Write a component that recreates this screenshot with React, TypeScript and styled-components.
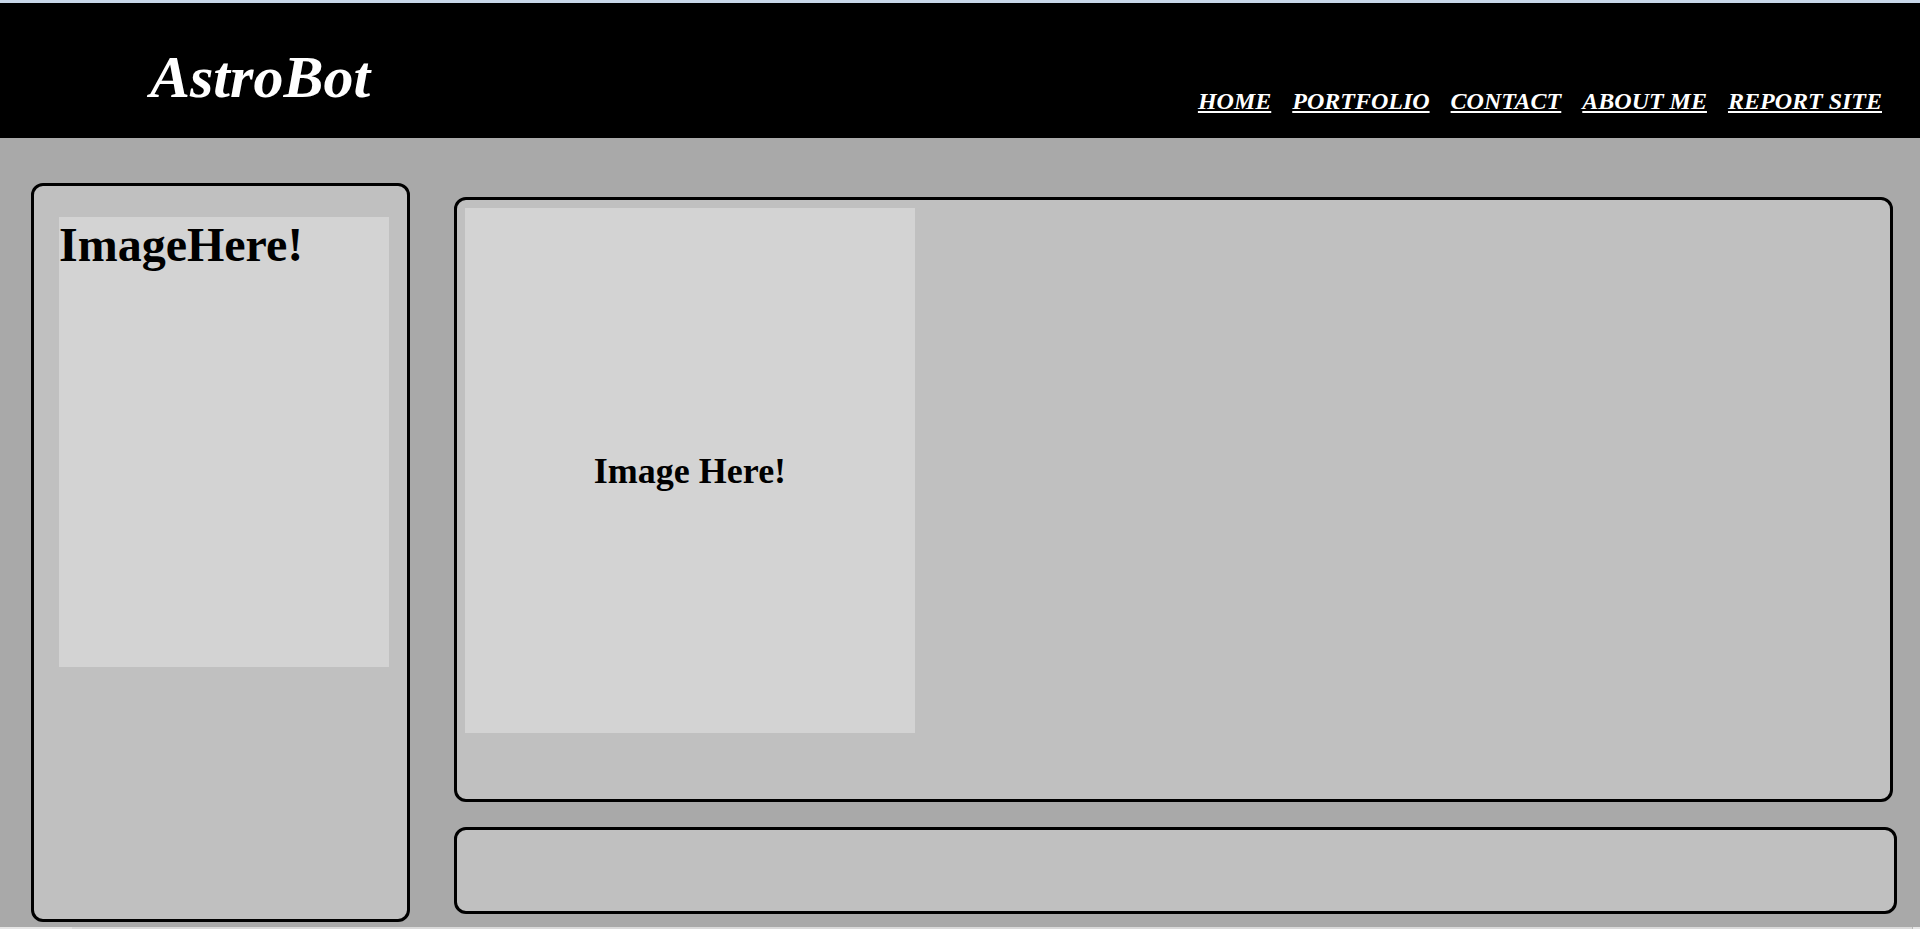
import React from "react";
import styled, { createGlobalStyle } from "styled-components";

const GlobalStyle = createGlobalStyle`
  html, body {
    margin: 0;
    padding: 0;
    background: #a9a9a9;
    font-family: "Liberation Serif", "Times New Roman", serif;
    overflow: hidden;
  }
  * { box-sizing: border-box; }
`;

const Page = styled.div`
  width: 1920px;
  height: 929px;
  display: flex;
  flex-direction: column;
`;

const TopLine = styled.div`
  height: 3px;
  background: #c9d7ea;
  flex: none;
`;

const Header = styled.header`
  height: 135px;
  background: #000;
  display: flex;
  justify-content: space-between;
  align-items: flex-start;
  flex: none;
`;

const Logo = styled.h1`
  margin: 40px 0 0 150px;
  font-size: 60px;
  font-weight: bold;
  font-style: italic;
  color: #fff;
  line-height: normal;
`;

const Nav = styled.nav`
  margin: 85px 38px 0 0;
  display: flex;
  gap: 21px;
`;

const NavLink = styled.a`
  font-size: 24px;
  font-weight: bold;
  font-style: italic;
  color: #fff;
  text-decoration: underline;
  line-height: normal;
  cursor: pointer;
`;

const Main = styled.main`
  flex: 1;
  display: flex;
  align-items: flex-start;
  gap: 44px;
  padding-left: 31px;
`;

const Panel = styled.section<{ $w: number; $h: number }>`
  width: ${(p) => p.$w}px;
  height: ${(p) => p.$h}px;
  background: #c0c0c0;
  border: 3px solid #000;
  border-radius: 12px;
  flex: none;
`;

const SidePanel = styled(Panel)`
  margin-top: 45px;
  padding: 31px 0 0 25px;
`;

const Column = styled.div`
  margin-top: 59px;
  display: flex;
  flex-direction: column;
  gap: 25px;
`;

const FeaturePanel = styled(Panel)`
  padding: 8px;
`;

const SideImage = styled.div`
  width: 330px;
  height: 450px;
  background: #d3d3d3;
`;

const SideTitle = styled.h2`
  margin: 0;
  font-size: 48px;
  font-weight: bold;
  color: #000;
  line-height: normal;
`;

const FeatureImage = styled.div`
  width: 450px;
  height: 525px;
  background: #d3d3d3;
  display: flex;
  align-items: center;
  justify-content: center;
`;

const FeatureTitle = styled.h2`
  margin: 0;
  font-size: 36px;
  font-weight: bold;
  color: #000;
`;

const ScrollBar = styled.div`
  height: 2px;
  flex: none;
  display: flex;
  background: #dadada;
`;

const ScrollPart = styled.div<{ $w: number; $c: string }>`
  width: ${(p) => p.$w}px;
  background: ${(p) => p.$c};
`;

const Spacer = styled.div`
  flex: 1;
`;

const links = ["HOME", "PORTFOLIO", "CONTACT", "ABOUT ME", "REPORT SITE"];

export default function App() {
  return (
    <>
      <GlobalStyle />
      <Page>
        <TopLine />
        <Header>
          <Logo>AstroBot</Logo>
          <Nav>
            {links.map((l) => (
              <NavLink key={l}>{l}</NavLink>
            ))}
          </Nav>
        </Header>
        <Main>
          <SidePanel $w={379} $h={739}>
            <SideImage>
              <SideTitle>ImageHere!</SideTitle>
            </SideImage>
          </SidePanel>
          <Column>
            <FeaturePanel $w={1439} $h={605}>
              <FeatureImage>
                <FeatureTitle>Image Here!</FeatureTitle>
              </FeatureImage>
            </FeaturePanel>
            <Panel $w={1443} $h={87} />
          </Column>
        </Main>
        <ScrollBar>
          <ScrollPart $w={72} $c="#e6e6e6" />
          <Spacer />
          <ScrollPart $w={1} $c="#b8b8b8" />
          <ScrollPart $w={7} $c="#e6e6e6" />
        </ScrollBar>
      </Page>
    </>
  );
}
